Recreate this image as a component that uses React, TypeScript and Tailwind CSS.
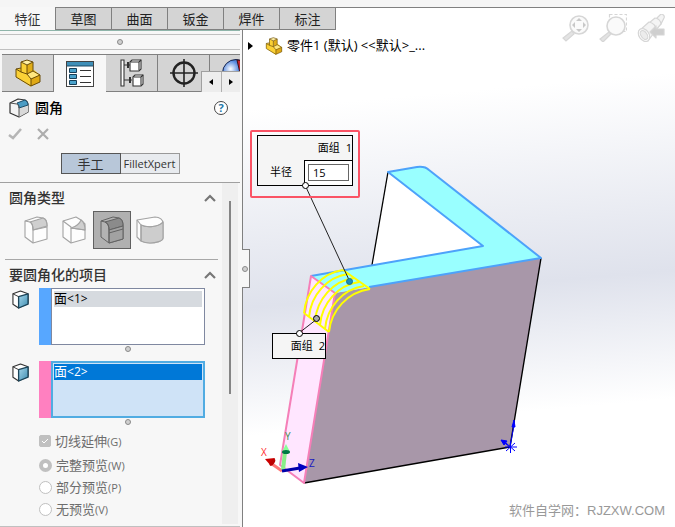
import { useState } from 'react'
import type { ReactNode } from 'react'

const commandTabs = ['特征', '草图', '曲面', '钣金', '焊件', '标注']

const previewOptions = [
  { value: 'full', label: '完整预览', hint: '(W)' },
  { value: 'partial', label: '部分预览', hint: '(P)' },
  { value: 'none', label: '无预览', hint: '(V)' },
]

function PartIcon({ className }: { className?: string }) {
  return (
    <svg viewBox="0 0 26 28" className={className} aria-hidden="true">
      <path d="M1 11l5-2 6 6 7-4 6 5v6l-9 5L1 17z" fill="#f8cc2a" />
      <path d="M6 3l6 3v10l4 4v8L1 18v-8l5 3z" fill="#fbd136" />
      <path d="M6 3l6-2 6 2-6 3z" fill="#fff0a5" />
      <path d="M12 6l6-3v9l-6 3z" fill="#e0ad18" />
      <path d="M12 15l6-3 7 4-9 4z" fill="#ffe780" />
      <path d="M16 20l9-4v7l-9 4z" fill="#dfa916" />
      <path
        d="M6 3l6-2 6 2v9l7 4v7l-9 4L1 18v-8l5-1zM6 3l6 3v9l4 5v7M12 6l6-3M12 15l6-3M16 20l9-4M6 9v4l6 2M1 10l5 3"
        fill="none"
        stroke="#6b4d08"
        strokeWidth="1"
        strokeLinejoin="round"
      />
    </svg>
  )
}

function PropertyIcon() {
  return (
    <svg viewBox="0 0 28 26" className="h-[26px] w-7" aria-hidden="true">
      <rect x="0.5" y="0.5" width="27" height="25" fill="#fff" stroke="#444" />
      <path d="M1 1h26v4H1z" fill="#3f8fb8" />
      <path d="M1 5h26" stroke="#1c4a66" />
      <g fill="#4aa3cc" stroke="#173f58">
        <path d="M3.500 7.500h7v4h-7zM3.500 13.500h7v4h-7zM3.500 19.500h7v4h-7z" />
      </g>
      <path d="M14 9.500h11M14 15.500h11M14 21.500h11" stroke="#333" />
    </svg>
  )
}

function ConfigIcon() {
  return (
    <svg viewBox="0 0 24 28" className="h-7 w-6" fill="#fff" stroke="#333" strokeWidth="1.100" aria-hidden="true">
      <path d="M1 1h3v26H1zM4 6h6M4 21h8" />
      <path d="M8 3v6M10 18v6" strokeWidth="2" />
      <path d="M10 3l2-2h9v9l-2 2h-9z" />
      <path d="M10 3h9v9M19 3l2-2" />
      <path d="M13 18l2-2h8v9l-2 2h-8z" />
      <path d="M13 18h8v9M21 18l2-2" />
    </svg>
  )
}

function TargetIcon() {
  return (
    <svg viewBox="0 0 28 28" className="size-7" fill="none" stroke="#222" aria-hidden="true">
      <circle cx="14" cy="14" r="10.500" strokeWidth="2.400" />
      <path d="M14 0v28M0 14h28" strokeWidth="1.600" />
    </svg>
  )
}

function AppearanceIcon() {
  return (
    <svg viewBox="0 0 28 28" className="h-7 w-7 shrink-0" aria-hidden="true">
      <defs>
        <radialGradient id="ball" cx="0.3" cy="0.35" r="0.6">
          <stop offset="0" stopColor="#fff" />
          <stop offset="0.5" stopColor="#5a8ce0" />
          <stop offset="1" stopColor="#123a8c" />
        </radialGradient>
      </defs>
      <circle cx="14" cy="14" r="13.500" fill="url(#ball)" stroke="#16224a" />
      <path d="M15 1c6 0 12 6 12 13H18z" fill="#c8242f" stroke="#401015" />
    </svg>
  )
}

function FilletIcon() {
  return (
    <svg viewBox="0 0 20 20" className="size-5" strokeLinejoin="round" aria-hidden="true">
      <path d="M1 5l8-4 7 1c2 1 3 3 3 5v7l-9 5-9-4z" fill="#f4f4f4" stroke="#333" strokeWidth="1.200" />
      <path d="M10 10v9l9-5V7z" fill="#d9d9d9" />
      <path d="M8 5l8-3c2 1 3 3 3 5l-9 3c0-3-1-4-2-5z" fill="#4b9cc4" stroke="#1d4d69" />
      <path d="M1 5l7 1c1 1 2 2 2 4v9" fill="none" stroke="#555" />
    </svg>
  )
}

function FaceIcon() {
  return (
    <svg viewBox="0 0 18 20" className="h-[19px] w-[17px]" strokeLinejoin="round" aria-hidden="true">
      <defs>
        <linearGradient id="face" x1="0" y1="0" x2="1" y2="1">
          <stop offset="0" stopColor="#a8d8ec" />
          <stop offset="1" stopColor="#3d8cb0" />
        </linearGradient>
      </defs>
      <path d="M1 4l8-3 8 3v10l-10 5-6-4z" fill="#fff" stroke="#333" strokeWidth="1.200" />
      <path d="M7 7l10-3v11L7 19z" fill="url(#face)" stroke="#1b4459" strokeWidth="1.400" />
      <path d="M1 4l6 3" stroke="#333" />
    </svg>
  )
}

function ConstantFillet() {
  return (
    <svg viewBox="0 0 24 28" className="h-7 w-6" fill="#fdfdfd" stroke="#a3a3a3" strokeWidth="1.100" strokeLinejoin="round" aria-hidden="true">
      <path d="M1 5l12-4 6 1c3 1 4 4 4 7v14L9 27l-8-6z" />
      <path d="M6 6l13-4c3 1 4 4 4 8L9 14c0-4-1-7-3-8z" fill="#cfcfcf" />
      <path d="M1 5l5 1c2 1 3 5 3 8v13M9 14l14-3" fill="none" />
    </svg>
  )
}

function VariableFillet() {
  return (
    <svg viewBox="0 0 24 28" className="h-7 w-6" fill="#fdfdfd" stroke="#a3a3a3" strokeWidth="1.100" strokeLinejoin="round" aria-hidden="true">
      <path d="M1 5l13-4 5 3 4 4v15L9 27l-8-6z" />
      <path d="M9 12c5-1 9-5 10-8 3 2 4 5 4 10L9 12z" fill="#cfcfcf" />
      <path d="M1 5l8 6v16M9 12l14 2" fill="none" />
    </svg>
  )
}

function FaceFillet() {
  return (
    <svg viewBox="0 0 24 28" className="h-7 w-6" fill="#b3b3b3" stroke="#626262" strokeWidth="1" strokeLinejoin="round" aria-hidden="true">
      <path d="M1 5l12-4 6 1c3 1 4 4 4 7v14L9 27l-8-6z" />
      <path d="M5 6l14-4c3 1 4 4 4 8L9 14c0-4-1-7-4-8z" fill="#8b8b8b" />
      <path d="M9 14l14-4v13L9 27z" fill="#a2a2a2" />
      <path d="M1 5l4 1c3 1 4 5 4 8v13M9 17l14-4" fill="none" />
    </svg>
  )
}

function FullRoundFillet() {
  return (
    <svg viewBox="0 0 28 28" className="size-7" fill="#fdfdfd" stroke="#a3a3a3" strokeWidth="1.100" strokeLinejoin="round" aria-hidden="true">
      <path d="M1 4l18-3c5 0 8 3 8 6v15c0 3-7 5-13 5-4 0-7-1-9-2l-4-4z" />
      <path d="M5 9c6 3 18 2 22-3v16c0 3-7 5-13 5-4 0-7-1-9-2z" fill="#cdcdcd" />
      <path d="M1 4l4 5c6 3 18 2 22-3M5 9v16" fill="none" />
    </svg>
  )
}

function Grip() {
  return <span className="block size-1.5 rounded-full border border-[#8a8a8a] bg-[#d0d0d0]" />
}

function Chevron() {
  return (
    <svg viewBox="0 0 12 8" className="h-2 w-3" fill="none" stroke="#777" strokeWidth="2.200" aria-hidden="true">
      <path d="M1 7l5-5 5 5" />
    </svg>
  )
}

function CommandTabs() {
  return (
    <div role="tablist" className="flex h-[23px]">
      {commandTabs.map((name, i) => (
        <button
          key={name}
          role="tab"
          aria-selected={i === 0}
          className={
            i === 0
              ? 'w-[55px] bg-[#f7f7f7] text-[13px] leading-5 text-[#333]'
              : 'w-14 border-y border-l border-[#808080] bg-[#d4d4d4] text-[13px] leading-5 text-[#222]'
          }
        >
          {name}
        </button>
      ))}
      <div className="flex-1 border-t border-l border-[#808080] bg-white" />
    </div>
  )
}

function ManagerTab({ label, active, children }: { label: string; active?: boolean; children: ReactNode }) {
  return (
    <button
      role="tab"
      aria-label={label}
      aria-selected={!!active}
      className={
        active
          ? 'flex w-[52px] shrink-0 items-center justify-center border-t border-[#808080] bg-[#f7f7f7]'
          : 'flex w-[52px] shrink-0 items-center justify-center border-y border-r border-[#808080] bg-[#d4d4d4]'
      }
    >
      {children}
    </button>
  )
}

function ManagerTabs() {
  return (
    <div className="relative ml-0.5 flex h-[38px] overflow-hidden">
      <ManagerTab label="零件">
        <PartIcon className="h-7 w-[26px]" />
      </ManagerTab>
      <ManagerTab label="属性" active>
        <PropertyIcon />
      </ManagerTab>
      <ManagerTab label="配置">
        <ConfigIcon />
      </ManagerTab>
      <ManagerTab label="尺寸">
        <TargetIcon />
      </ManagerTab>
      <ManagerTab label="外观">
        <AppearanceIcon />
      </ManagerTab>
      <div className="absolute right-0 bottom-0 flex h-[21px] w-[39px] border-t border-l border-[#a0a0a0] bg-[#ededed]">
        <button aria-label="向左" className="flex flex-1 items-center justify-center border-r border-[#b0b0b0]">
          <span className="border-y-3 border-r-4 border-y-transparent border-r-black" />
        </button>
        <button aria-label="向右" className="flex flex-1 items-center justify-center">
          <span className="border-y-3 border-l-4 border-y-transparent border-l-black" />
        </button>
      </div>
    </div>
  )
}

function SectionTitle({ children }: { children: ReactNode }) {
  return (
    <button className="flex h-7 w-full items-center justify-between pt-0.5 pr-0.5 pl-[9px] text-sm font-medium text-[#333]">
      {children}
      <Chevron />
    </button>
  )
}

function SelectionBox({ item, focused }: { item: string; focused?: boolean }) {
  return (
    <div className="flex gap-2.5 pl-3">
      <div className="w-[17px] pt-0.5">
        <FaceIcon />
      </div>
      <div className="flex-1">
        <div className="flex h-[57px]">
          <div className={focused ? 'w-3 bg-[#ff80c0]' : 'w-3 bg-[#57a7ff]'} />
          <div
            role="listbox"
            aria-label={item}
            className={
              focused
                ? 'flex-1 border-2 border-[#51ace2] bg-[#cfe3f7] p-px'
                : 'flex-1 border border-[#7f88a0] bg-white p-0.5'
            }
          >
            <div
              role="option"
              aria-selected={!!focused}
              className={
                focused
                  ? 'h-4 bg-[#0078d7] text-[13px] leading-[14px] text-white'
                  : 'h-4 bg-[#d6dadf] text-[13px] leading-[14px] text-black'
              }
            >
              面<span className="text-xs">{item}</span>
            </div>
          </div>
        </div>
        <div className="flex h-4 items-start justify-center pt-px pl-3">
          <Grip />
        </div>
      </div>
    </div>
  )
}

function PropertyPanel() {
  const [tangent, setTangent] = useState(true)
  const [preview, setPreview] = useState('full')

  return (
    <aside className="flex w-[243px] shrink-0 flex-col border-r border-[#808080] bg-[#f7f7f7]">
      <div className="w-60 border-t border-[#8fb5aa]">
        <div className="mt-[3px] flex h-4 items-center justify-center border-y border-[#c0c0c0]">
          <Grip />
        </div>
        <div className="mt-1">
          <ManagerTabs />
        </div>

        <div className="flex h-[31px] items-center gap-1.5 pr-3 pl-[9px]">
          <FilletIcon />
          <h1 className="flex-1 text-sm font-medium text-black">圆角</h1>
          <button
            aria-label="帮助"
            className="flex size-3.5 items-center justify-center rounded-full border border-[#444] bg-white text-[11px] leading-3 font-bold text-[#2478a8]"
          >
            ?
          </button>
        </div>
        <div className="flex h-[22px] items-center gap-[15px] pl-2">
          <button aria-label="确定">
            <svg viewBox="0 0 14 12" className="h-3 w-3.5" fill="none" stroke="#b5b5b5" strokeWidth="2.600" aria-hidden="true">
              <path d="M1 7l4 3 8-9" />
            </svg>
          </button>
          <button aria-label="取消">
            <svg viewBox="0 0 12 12" className="h-3 w-3" fill="none" stroke="#adadad" strokeWidth="2.200" aria-hidden="true">
              <path d="M1 1l10 10M11 1L1 11" />
            </svg>
          </button>
        </div>
        <div className="flex justify-center py-2">
          <button className="h-[21px] w-[60px] border border-[#555] bg-[#b8c7d9] text-[13px] leading-[18px] text-[#333]">
            手工
          </button>
          <button className="h-[21px] w-[59px] border border-l-0 border-[#999] bg-[#e8ebef] text-[11px] leading-5 text-[#333]">
            FilletXpert
          </button>
        </div>
        <div className="border-t border-[#a0a0a0]" />
      </div>

      <div className="flex w-60 flex-1 border-b border-[#c0c0c0]">
        <div className="w-[222px]">
          <div className="w-[218px]">
            <SectionTitle>圆角类型</SectionTitle>
            <div className="flex pl-[17px]">
              <button aria-label="恒定大小圆角" className="flex size-[38px] items-center justify-center">
                <ConstantFillet />
              </button>
              <button aria-label="变量大小圆角" className="flex size-[38px] items-center justify-center">
                <VariableFillet />
              </button>
              <button
                aria-label="面圆角"
                aria-pressed="true"
                className="flex size-[38px] items-center justify-center border border-[#606060] bg-[#b0b0b0]"
              >
                <FaceFillet />
              </button>
              <button aria-label="完整圆角" className="flex size-[38px] items-center justify-center">
                <FullRoundFillet />
              </button>
            </div>
            <div className="mt-2.5 ml-[5px] border-t border-[#a8a8a8]" />
            <SectionTitle>要圆角化的项目</SectionTitle>
          </div>
          <div className="w-[205px]">
            <SelectionBox item="<1>" />
            <SelectionBox item="<2>" focused />
          </div>

          <div className="pl-[39px] text-[13px] text-[#6d6d6d]">
            <label className="flex h-[14px] items-center gap-1">
              <span className="relative flex size-3">
                <input
                  type="checkbox"
                  checked={tangent}
                  onChange={(e) => setTangent(e.target.checked)}
                  className="size-3 appearance-none rounded-xs border border-[#c0c0c0] checked:bg-[#c0c0c0]"
                />
                {tangent && (
                  <svg viewBox="0 0 12 12" className="pointer-events-none absolute inset-0" fill="none" stroke="#fff" aria-hidden="true">
                    <path d="M3 6l2 2 4-4" />
                  </svg>
                )}
              </span>
              <span className="leading-4">
                切线延伸<span className="text-[11px]">(G)</span>
              </span>
            </label>
            <div className="pt-[6px]">
              {previewOptions.map((option) => (
                <label key={option.value} className="flex h-[22px] items-center gap-1">
                  <input
                    type="radio"
                    name="preview"
                    checked={preview === option.value}
                    onChange={() => setPreview(option.value)}
                    className="size-[13px] appearance-none rounded-full border border-[#c0c0c0] bg-white checked:border-4"
                  />
                  <span className="leading-4">
                    {option.label}
                    <span className="text-[11px]">{option.hint}</span>
                  </span>
                </label>
              ))}
            </div>
          </div>
        </div>
        <div className="mb-0.5 w-4 bg-[#efefef] pt-[18px]">
          <div className="ml-[7px] h-[193px] w-0.5 bg-[#858585]" />
        </div>
      </div>
    </aside>
  )
}

function Model() {
  return (
    <svg viewBox="243 30 432 497" className="absolute top-0 left-0 h-[497px] w-[432px]" strokeLinejoin="round" aria-hidden="true">
      <path d="M388 172l95 74-111 19z" fill="#fff" />
      <path d="M388 172l-16 93" stroke="#000" strokeWidth="1.300" />
      <path d="M335 293L541 258l-31 189-206 36z" fill="#a897a9" />
      <path d="M541 258l-31 189-206 36" fill="none" stroke="#000" strokeWidth="1.400" />
      <path d="M311 276l24 17-31 190-24-18z" fill="#ffe6ff" />
      <path d="M311 276l172-30-95-74 29-5q8-1 12 3l112 88-206 35z" fill="#99ffff" />
      <path d="M369 287l172-29-112-88q-4-4-12-3l-29 5 95 74-172 30" fill="none" stroke="#4da2fa" strokeWidth="2" />
      <path d="M280 465l31-189 24 17-31 190z" fill="none" stroke="#f57fb8" strokeWidth="2" />

      <g fill="none" stroke="#ffff00" strokeWidth="2">
        <path d="M343 270l27 19M304 313l25 19" />
        <path d="M304 313c2-22 18-40 39-43" />
        <path d="M309 317c2-22 18-40 39-43" />
        <path d="M315 321c2-22 18-40 39-43" />
        <path d="M320 325c2-22 18-40 39-43" />
        <path d="M325 329c2-22 18-40 39-43" />
        <path d="M329 332c2-22 19-40 41-43" />
      </g>

      <path d="M305 185l45 97M299 333l18-14" stroke="#222" />
      <circle cx="349.500" cy="281.500" r="3" fill="#1c8fb8" stroke="#17708f" />
      <circle cx="316.500" cy="318.500" r="3" fill="#aaa" stroke="#000" />

      <g strokeWidth="3">
        <path d="M282 471l-10-7" stroke="#f77" />
        <path d="M283 470l2-18" stroke="#8e8" strokeWidth="4" />
        <path d="M282 471l18-3" stroke="#00a" />
      </g>
      <path d="M265 459l10-1-4 8z" fill="#c00" />
      <ellipse cx="272.500" cy="462" rx="2" ry="4" transform="rotate(35 272 462)" fill="#b00" />
      <path d="M286 444l4 8h-8z" fill="#8f9" />
      <ellipse cx="286" cy="452" rx="4" ry="2" fill="#074" />
      <path d="M308 467l-10-4 1 9z" fill="#0000c0" />

      <g stroke="#00f" fill="#00f">
        <path d="M506 443l9 8M515 443l-9 8M510.500 441v12M505 447h12" />
        <path d="M510 447l4-22M510 447l-8-6" />
        <path d="M514 420l1 7h-3zM501 440l6 1-3 4z" />
      </g>
    </svg>
  )
}

function ViewTools() {
  return (
    <div className="absolute -top-4 right-2.5 flex gap-2.5">
      <button aria-label="整屏显示全图">
        <svg viewBox="0 0 28 28" className="size-7" fill="#fafafa" stroke="#d6d6d6" strokeWidth="1.200" aria-hidden="true">
          <path d="M11 17l-9 7 3 3 8-7z" fill="#e3e3e3" />
          <circle cx="18" cy="11" r="9" strokeWidth="1.600" />
          <path d="M18 4l3 3h-6zM18 18l3-3h-6zM11 11l3-3v6zM25 11l-3-3v6z" fill="#c8c8c8" stroke="none" />
        </svg>
      </button>
      <button aria-label="局部放大">
        <svg viewBox="0 0 28 28" className="size-7" fill="#fafafa" stroke="#d6d6d6" strokeWidth="1.200" aria-hidden="true">
          <path d="M10.500 0.500h17v17h-17z" fill="none" strokeDasharray="3 2" />
          <path d="M10 18l-9 7 3 3 8-8z" fill="#e3e3e3" />
          <circle cx="17" cy="12" r="9" strokeWidth="1.600" />
        </svg>
      </button>
      <button aria-label="上一视图">
        <svg viewBox="0 0 28 28" className="size-7" fill="#f4f4f4" stroke="#d6d6d6" strokeWidth="1.200" strokeLinejoin="round" aria-hidden="true">
          <path d="M20 4l4-4c2 0 4 2 3 4l-3 6z" />
          <path d="M12 9l6-5c3 0 6 3 6 6l-6 7z" />
          <path d="M2 17L12 8c4 1 7 4 7 8l-8 11z" />
          <ellipse cx="7" cy="21" rx="5" ry="7" transform="rotate(-35 7 21)" fill="#fff" />
          <ellipse cx="7" cy="21" rx="3" ry="5" transform="rotate(-35 7 21)" fill="#ececec" />
          <path d="M13 18l6-6v3h8v6h-8v3z" fill="#cfcfcf" />
        </svg>
      </button>
    </div>
  )
}

function Viewport() {
  const [radius, setRadius] = useState('15')

  return (
    <main className="relative flex-1 bg-linear-175 from-white from-15% via-[#dfe2ec] via-52% to-white to-76%">
      <Model />
      <ViewTools />

      <div className="absolute top-1.5 left-[5px] flex items-center text-[13px] text-black">
        <button aria-label="展开" className="mr-3">
          <span className="block border-y-4 border-l-5 border-y-transparent border-l-black" />
        </button>
        <PartIcon className="mr-1 h-[18px] w-[18px]" />
        <span className="whitespace-pre">零件1 (默认) &lt;&lt;默认&gt;_...</span>
      </div>

      <div className="absolute top-[100px] left-[7px] h-[68px] w-[110px] rounded-xs border-2 border-[#fa5365] px-[5px] py-[3px]">
        <div className="relative flex h-[51px] flex-col border border-black bg-[#f5f5f5] text-[11px] text-black">
          <div className="flex h-6 items-center justify-end gap-1.5">
            <span>面组</span>
            <span>1</span>
          </div>
          <div className="flex flex-1">
            <label htmlFor="radius" className="flex w-[46px] items-center justify-center">
              半径
            </label>
            <div className="flex-1 border-t border-l border-black bg-white p-[3px]">
              <input
                id="radius"
                value={radius}
                onChange={(e) => setRadius(e.target.value)}
                className="block h-[17px] w-full border border-[#666] bg-white px-1 text-[11px]"
              />
            </div>
          </div>
          <span className="absolute -bottom-1 left-11 size-[7px] rounded-full border border-black bg-white" />
        </div>
      </div>

      <div className="absolute top-[303px] left-[29px] flex h-[26px] w-[54px] items-center justify-end gap-1.5 border border-black bg-[#f5f5f5] text-[11px] text-black">
        <span>面组</span>
        <span>2</span>
        <span className="absolute -top-1 left-[23px] size-[7px] rounded-full border border-black bg-white" />
      </div>

      <span className="absolute top-[416px] left-[18px] text-[10px] leading-3 font-medium text-[#ff3030]">X</span>
      <span className="absolute top-[400px] left-[42px] text-[10px] leading-3 font-medium text-[#3a8a4a]">Y</span>
      <span className="absolute top-[427px] left-[66px] text-[10px] leading-3 font-medium text-[#1818c0]">Z</span>

      <div className="absolute top-[219px] -left-px flex h-[39px] w-2 items-center border border-l-0 border-[#808080] bg-[#f7f7f7]">
        <Grip />
      </div>

      <p className="absolute right-2.5 bottom-1.5 font-['Liberation_Sans','Noto_Sans_CJK_SC',sans-serif] text-[13px] leading-5 text-[#999]">
        软件自学网：RJZXW.COM
      </p>
    </main>
  )
}

export default function App() {
  return (
    <div className="flex min-h-screen flex-col bg-[#f7f7f7] font-['Open_Sans','Noto_Sans_CJK_SC',sans-serif]">
      <div className="h-[7px] bg-[#f5f5f5]" />
      <CommandTabs />
      <div className="flex flex-1">
        <PropertyPanel />
        <Viewport />
      </div>
    </div>
  )
}
